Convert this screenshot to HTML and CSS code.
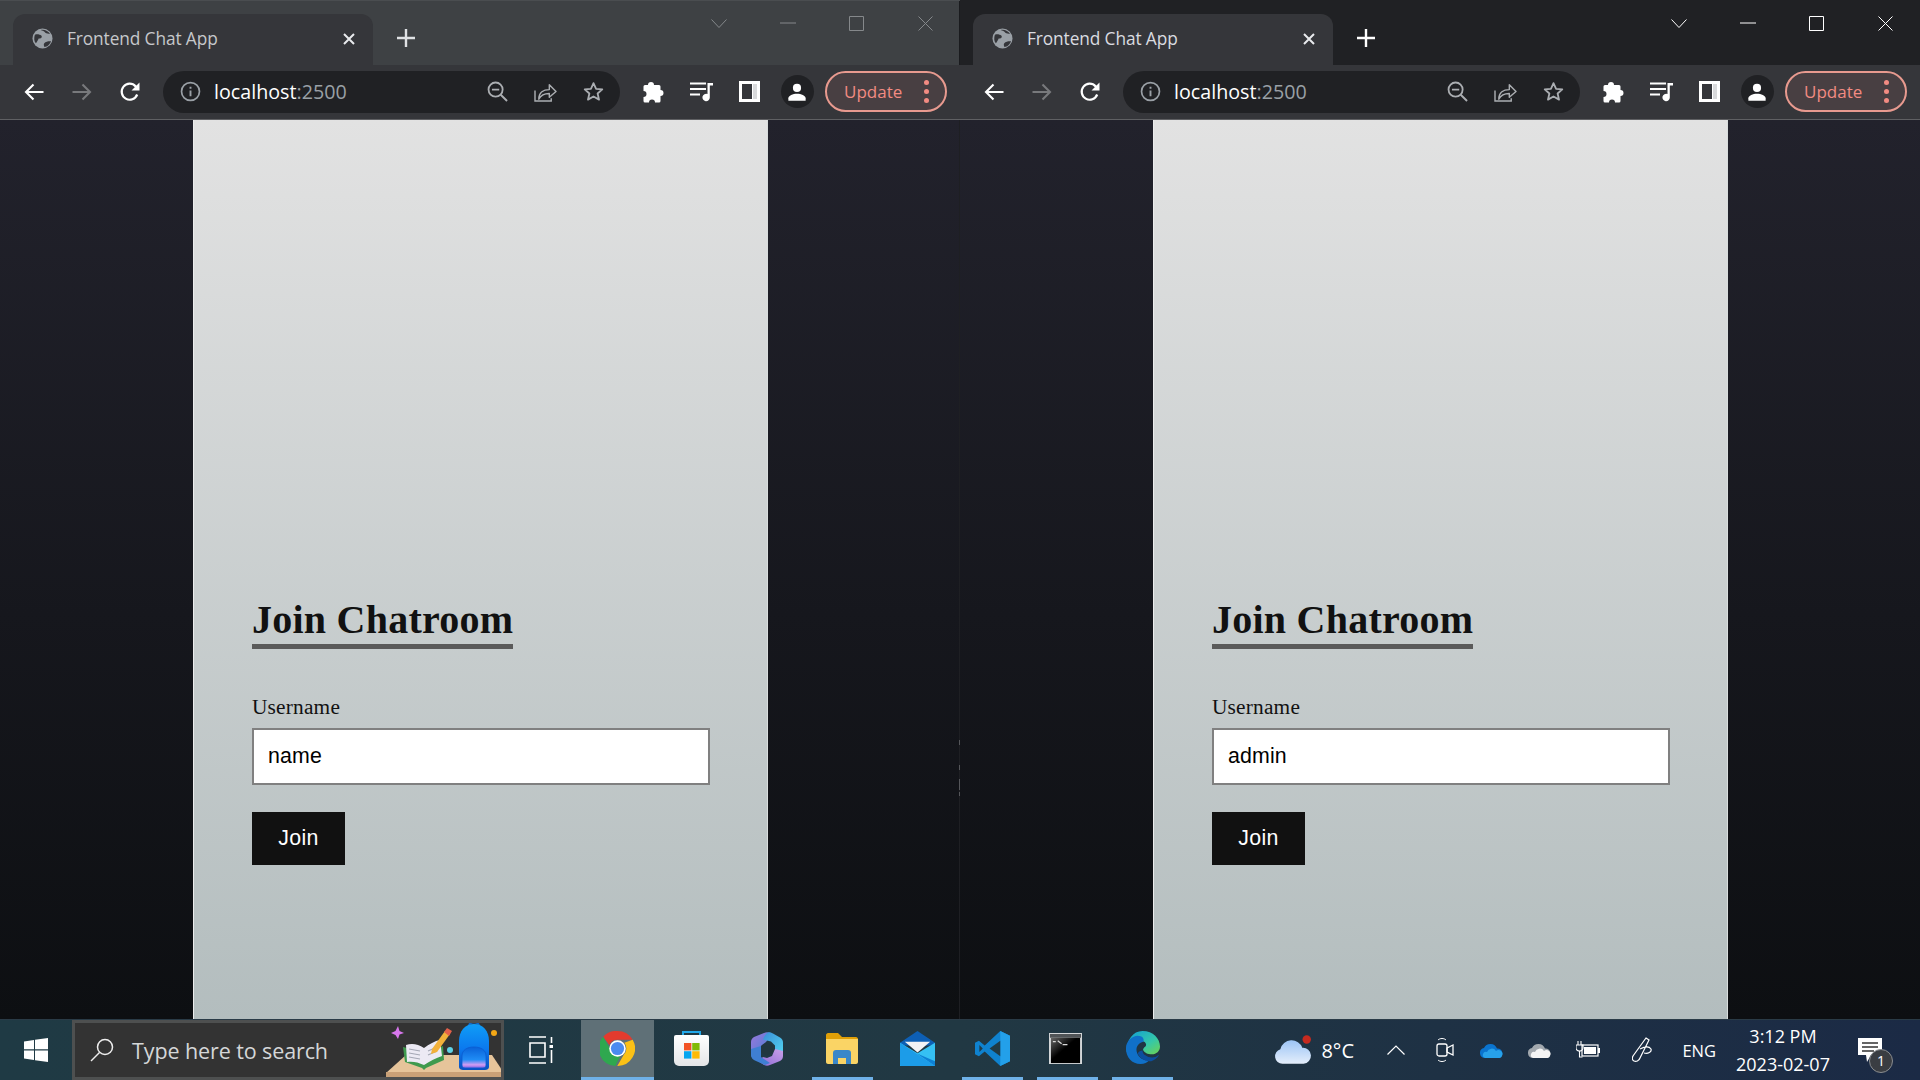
FILE: index.html
```html
<!DOCTYPE html>
<html lang="en">
<head>
<meta charset="utf-8">
<title>Frontend Chat App</title>
<link rel="stylesheet" href="styles.css">
</head>
<body>
<svg class="defs" aria-hidden="true">
  <defs>
    <linearGradient id="gBag" x1="0" y1="0" x2="0" y2="1"><stop offset="0" stop-color="#0f9df7"/><stop offset=".55" stop-color="#0b78ee"/><stop offset="1" stop-color="#0c50c0"/></linearGradient>
    <linearGradient id="gPocket" x1="0" y1="0" x2="0" y2="1"><stop offset="0" stop-color="#0a62d8"/><stop offset=".6" stop-color="#1f8cf5"/><stop offset=".85" stop-color="#d59cf2"/><stop offset="1" stop-color="#7a5fe0"/></linearGradient>
    <linearGradient id="gEdge" x1="0" y1="0" x2="1" y2="1"><stop offset="0" stop-color="#0f9bd7"/><stop offset=".6" stop-color="#35c8a8"/><stop offset="1" stop-color="#6fd24f"/></linearGradient>
    <linearGradient id="gCloud" x1="0" y1="0" x2="0" y2="1"><stop offset="0" stop-color="#9cc4f5"/><stop offset="1" stop-color="#e4eefb"/></linearGradient>
    <linearGradient id="gCmd" x1="0" y1="0" x2="1" y2="1"><stop offset="0" stop-color="#666"/><stop offset=".45" stop-color="#000"/></linearGradient>
    <linearGradient id="gStore" x1="0" y1="0" x2="0" y2="1"><stop offset="0" stop-color="#fff"/><stop offset="1" stop-color="#e4e6e8"/></linearGradient>
    <linearGradient id="gTL" x1="0" y1="0" x2="1" y2="1"><stop offset="0" stop-color="#9a78dc"/><stop offset="1" stop-color="#3f7fd2"/></linearGradient>
    <linearGradient id="gTR" x1="0" y1="0" x2="1" y2="1"><stop offset="0" stop-color="#3a8ed8"/><stop offset="1" stop-color="#53d6f2"/></linearGradient>
    <linearGradient id="gBR" x1="1" y1="0" x2="0" y2="1"><stop offset="0" stop-color="#c9a0ea"/><stop offset="1" stop-color="#8d6ad4"/></linearGradient>

    <symbol id="i-globe" viewBox="0 0 22 22"><circle cx="11" cy="11" r="10.500" fill="currentColor"/><path d="M3 7c3-1 5 0 7 1 1 2-1 3-3 3-1 2-2 4-3 5C2 14 2 10 3 7zM13 20c-1-2-1-4 1-5s4-1 6-1c-1 3-4 6-7 6zM9 2c2 1 4 1 5 3 1 1 3 1 5 1C17 3 13 1 9 2z" fill="#35363a"/></symbol>
    <symbol id="i-x" viewBox="0 0 14 14"><path d="M2 2l10 10M12 2L2 12" fill="none" stroke="currentColor" stroke-width="2"/></symbol>
    <symbol id="i-plus" viewBox="0 0 18 18"><path d="M9 0v18M0 9h18" fill="none" stroke="currentColor" stroke-width="2.400"/></symbol>
    <symbol id="i-back" viewBox="0 0 20 18"><path d="M19.500 9H2M9.500 1.500L2 9l7.500 7.500" fill="none" stroke="currentColor" stroke-width="2.100"/></symbol>
    <symbol id="i-fwd" viewBox="0 0 20 18"><path d="M.5 9H18M10.500 1.500L18 9l-7.500 7.500" fill="none" stroke="currentColor" stroke-width="2.100"/></symbol>
    <symbol id="i-reload" viewBox="0 0 22 22"><path d="M18.200 13.500A8 8 0 1 1 16.700 5.400L19 7.600" fill="none" stroke="currentColor" stroke-width="2.200"/><path d="M20.500 1.500v8h-8z" fill="currentColor"/></symbol>
    <symbol id="i-info" viewBox="0 0 22 22"><circle cx="11" cy="11" r="9.400" fill="none" stroke="currentColor" stroke-width="1.800"/><path d="M10 10h2v6h-2zM10 6h2v2h-2z" fill="currentColor"/></symbol>
    <symbol id="i-zoom" viewBox="0 0 22 22"><circle cx="9" cy="9" r="7.400" fill="none" stroke="currentColor" stroke-width="1.900"/><path d="M5.200 9h7.600M14.400 14.400l6.600 6.600" fill="none" stroke="currentColor" stroke-width="2"/></symbol>
    <symbol id="i-share" viewBox="0 0 24 22"><path d="M1 10v11h17v-3" fill="none" stroke="currentColor" stroke-width="1.500"/><path d="M5 19c0-7 5-10 11-10V4l7 7-7 6v-4c-5 0-9 2-11 6z" fill="none" stroke="currentColor" stroke-width="1.500" stroke-linejoin="round"/></symbol>
    <symbol id="i-star" viewBox="0 0 22 22"><path d="M11 2.200l2.700 6 6.500.6-4.900 4.300 1.500 6.400L11 16.200l-5.800 3.300 1.500-6.400L1.800 8.800l6.500-.6z" fill="none" stroke="currentColor" stroke-width="1.900" stroke-linejoin="round"/></symbol>
    <symbol id="i-puzzle" viewBox="0 0 22 22"><path d="M8 1a3 3 0 0 1 3 3h5a1.500 1.500 0 0 1 1.500 1.500V9a3 3 0 1 1 0 6v5a1.500 1.500 0 0 1-1.500 1.500h-4a3 3 0 1 0-6 0H2A1.500 1.500 0 0 1 .5 20v-4a3 3 0 1 0 0-6V5.500A1.500 1.500 0 0 1 2 4h3a3 3 0 0 1 3-3z" fill="currentColor"/></symbol>
    <symbol id="i-media" viewBox="0 0 24 20"><path d="M0 1.500h16M0 7h16M0 12.500h10" stroke="currentColor" stroke-width="2" fill="none"/><path d="M17.500 1h5.500v2.500h-3.200V15.500a3.700 3.700 0 1 1-2.300-3.400z" fill="currentColor"/></symbol>
    <symbol id="i-side" viewBox="0 0 21 21"><path d="M0 0h21v21H0z" fill="currentColor"/><path d="M3 3h10v15H3z" fill="#35363a"/><path d="M14 3h4v15h-4z" fill="#d9dadc"/></symbol>
    <symbol id="i-avatar" viewBox="0 0 22 22"><circle cx="11" cy="6.500" r="4.500" fill="currentColor"/><path d="M1.500 20.500v-2.500c0-3 5-5 9.500-5s9.500 2 9.500 5v2.500z" fill="currentColor"/></symbol>
    <symbol id="i-chev" viewBox="0 0 16 9"><path d="M.5.500L8 8.500 15.500.500" fill="none" stroke="currentColor"/></symbol>
    <symbol id="i-min" viewBox="0 0 16 2"><path d="M0 1h16" stroke="currentColor"/></symbol>
    <symbol id="i-max" viewBox="0 0 15 15"><path d="M.5.500h14v14H.5z" fill="none" stroke="currentColor"/></symbol>
    <symbol id="i-close" viewBox="0 0 15 15"><path d="M.5.500l14 14M14.500.500l-14 14" fill="none" stroke="currentColor"/></symbol>
  </defs>
</svg>

<main class="windows">
  <section class="win win--inactive">
    <header class="tabstrip">
      <div class="tab">
        <svg class="ic-globe"><use href="#i-globe"/></svg>
        <span class="tab-title">Frontend Chat App</span>
        <svg class="ic-x"><use href="#i-x"/></svg>
      </div>
      <svg class="ic-plus"><use href="#i-plus"/></svg>
      <div class="controls">
        <span class="ctl"><svg class="c-chev"><use href="#i-chev"/></svg></span>
        <span class="ctl"><svg class="c-min"><use href="#i-min"/></svg></span>
        <span class="ctl"><svg class="c-max"><use href="#i-max"/></svg></span>
        <span class="ctl"><svg class="c-close"><use href="#i-close"/></svg></span>
      </div>
    </header>
    <nav class="toolbar">
      <span class="tb"><svg class="ic-nav"><use href="#i-back"/></svg></span>
      <span class="tb tb--off"><svg class="ic-nav"><use href="#i-fwd"/></svg></span>
      <span class="tb"><svg class="ic-reload"><use href="#i-reload"/></svg></span>
      <div class="omni">
        <svg class="ic-info"><use href="#i-info"/></svg>
        <span class="url"><b>localhost</b>:2500</span>
        <span class="omni-actions">
          <svg class="ic-omni"><use href="#i-zoom"/></svg>
          <svg class="ic-omni ic-share"><use href="#i-share"/></svg>
          <svg class="ic-omni"><use href="#i-star"/></svg>
        </span>
      </div>
      <span class="tb tb--ext"><svg class="ic-puzzle"><use href="#i-puzzle"/></svg></span>
      <span class="tb"><svg class="ic-media"><use href="#i-media"/></svg></span>
      <span class="tb"><svg class="ic-side"><use href="#i-side"/></svg></span>
      <span class="tb"><span class="avatar"><svg class="ic-avatar"><use href="#i-avatar"/></svg></span></span>
      <div class="update"><span>Update</span><i class="dots"><em></em><em></em><em></em></i></div>
    </nav>
    <div class="viewport">
      <form class="card">
        <h1 class="title">Join Chatroom</h1>
        <label class="lbl" for="u1">Username</label>
        <input class="field" id="u1" type="text" value="name">
        <button class="join" type="button">Join</button>
      </form>
    </div>
  </section>

  <section class="win win--active">
    <header class="tabstrip">
      <div class="tab">
        <svg class="ic-globe"><use href="#i-globe"/></svg>
        <span class="tab-title">Frontend Chat App</span>
        <svg class="ic-x"><use href="#i-x"/></svg>
      </div>
      <svg class="ic-plus"><use href="#i-plus"/></svg>
      <div class="controls">
        <span class="ctl"><svg class="c-chev"><use href="#i-chev"/></svg></span>
        <span class="ctl"><svg class="c-min"><use href="#i-min"/></svg></span>
        <span class="ctl"><svg class="c-max"><use href="#i-max"/></svg></span>
        <span class="ctl"><svg class="c-close"><use href="#i-close"/></svg></span>
      </div>
    </header>
    <nav class="toolbar">
      <span class="tb"><svg class="ic-nav"><use href="#i-back"/></svg></span>
      <span class="tb tb--off"><svg class="ic-nav"><use href="#i-fwd"/></svg></span>
      <span class="tb"><svg class="ic-reload"><use href="#i-reload"/></svg></span>
      <div class="omni">
        <svg class="ic-info"><use href="#i-info"/></svg>
        <span class="url"><b>localhost</b>:2500</span>
        <span class="omni-actions">
          <svg class="ic-omni"><use href="#i-zoom"/></svg>
          <svg class="ic-omni ic-share"><use href="#i-share"/></svg>
          <svg class="ic-omni"><use href="#i-star"/></svg>
        </span>
      </div>
      <span class="tb tb--ext"><svg class="ic-puzzle"><use href="#i-puzzle"/></svg></span>
      <span class="tb"><svg class="ic-media"><use href="#i-media"/></svg></span>
      <span class="tb"><svg class="ic-side"><use href="#i-side"/></svg></span>
      <span class="tb"><span class="avatar"><svg class="ic-avatar"><use href="#i-avatar"/></svg></span></span>
      <div class="update"><span>Update</span><i class="dots"><em></em><em></em><em></em></i></div>
    </nav>
    <div class="viewport">
      <form class="card">
        <h1 class="title">Join Chatroom</h1>
        <label class="lbl" for="u2">Username</label>
        <input class="field" id="u2" type="text" value="admin">
        <button class="join" type="button">Join</button>
      </form>
    </div>
  </section>
</main>

<footer class="taskbar">
  <span class="start">
    <svg class="t-win" viewBox="0 0 24 24"><path d="M0 3.400l10-1.400v9.300H0zM11 1.800L24 0v11.300H11zM0 12.500h10v9.500L0 20.600zM11 12.500h13V24l-13-1.800z" fill="#fff"/></svg>
  </span>
  <div class="search">
    <svg class="t-lens" viewBox="0 0 24 24"><circle cx="15" cy="9" r="7.500" fill="none" stroke="#eee" stroke-width="1.500"/><path d="M9.500 14.500L1 23" stroke="#eee" stroke-width="1.500"/></svg>
    <span class="search-text">Type here to search</span>
    <svg class="t-art" viewBox="0 0 118 57">
      <path d="M0 53L20 35h86l12 18v4H0z" fill="#e6c49a"/><path d="M0 52h118v5H0z" fill="#c9a077"/>
      <path d="M12 6l1.500 5 4.500 2-4.500 1.500L12 19l-2.500-4L5 13l4.500-2z" fill="#d777ec"/>
      <path d="M17 27l23 6 17-7 1 14-18 8-2 2-2-2-17-6z" fill="#3f9a4e"/>
      <path d="M20 25c6-2 12-1 18 3l0 17c-6-3-12-4-17-3zM38 28c5-4 11-7 16-8l2 16c-6 2-12 5-18 9z" fill="#eceaf4"/>
      <path d="M23 29l11 2M23 33l11 2M23 37l11 2M42 31l9-4M42 35l9-4" stroke="#a5a8b5" stroke-width="1.200"/>
      <path d="M46 29l13-18 5 3-13 18-6 2z" fill="#f2b13a"/><path d="M58 12l3-4 5 3-3 5z" fill="#e3604a"/>
      <circle cx="64" cy="30" r="3" fill="#5fd2e5"/>
      <path d="M83 6c0-5 10-5 10 0" fill="none" stroke="#1268c8" stroke-width="2"/>
      <path d="M88 4c9 0 15 7 15 17v26c0 2-2 3-4 3H77c-2 0-4-1-4-3V21C73 11 79 4 88 4z" fill="url(#gBag)"/>
      <path d="M76 45V36c0-6 5-9 12-9s12 3 12 9v9c0 2-1 3-3 3H79c-2 0-3-1-3-3z" fill="url(#gPocket)" stroke="#0a5cd0" stroke-width=".8"/>
      <circle cx="108" cy="13" r="3" fill="#f3a716"/>
    </svg>
  </div>
  <span class="taskview">
    <svg class="t-view" viewBox="0 0 24 28"><path d="M0 1h17M0 27h17M1 7h15v14H1z" fill="none" stroke="#fff" stroke-width="1.600"/><path d="M22.500 1v6M22.500 14v13" stroke="#fff" stroke-width="1.600"/><rect x="20.500" y="9" width="4" height="3" fill="#fff"/></svg>
  </span>
  <span class="app app--chrome">
    <svg class="t-app" viewBox="0 0 36 36">
      <path d="M18 0a18 18 0 0 1 15.600 9H18a9 9 0 0 0-8.300 5.500L3.200 5.900A18 18 0 0 1 18 0z" fill="#e33b2e"/>
      <path d="M3.200 5.900l6.900 11.800a9 9 0 0 0 11 7.800L15.800 36A18 18 0 0 1 3.200 5.900z" fill="#2fa84f"/>
      <path d="M33.600 9a18 18 0 0 1-15.800 27l6.900-12A9 9 0 0 0 25 12z" fill="#fbc116"/>
      <circle cx="18" cy="18" r="8.500" fill="#fff"/><circle cx="18" cy="18" r="6.800" fill="#4a8bf0"/>
    </svg>
  </span>
  <span class="app app--store">
    <svg class="t-app" viewBox="0 0 35 35">
      <path d="M9 6V1h17v5" fill="none" stroke="#22a8ea" stroke-width="2"/>
      <path d="M2 4h31a2 2 0 0 1 2 2v24a5 5 0 0 1-5 5H5a5 5 0 0 1-5-5V6a2 2 0 0 1 2-2z" fill="url(#gStore)"/>
      <path d="M10 12h7.400v7.400H10z" fill="#f25325"/><path d="M18.200 12h7.400v7.400h-7.400z" fill="#80bb05"/><path d="M10 20.200h7.400v7.400H10z" fill="#05a6f0"/><path d="M18.200 20.200h7.400v7.400h-7.400z" fill="#ffba08"/>
    </svg>
  </span>
  <span class="app app--m365">
    <svg class="t-m365" viewBox="0 0 32 34">
      <path d="M13 1c2-1 4-1 6 0l2 1-6 8-4 3-1 6v7l-5 2c-3-1-5-3-5-7V10c0-2 1-4 3-5z" fill="url(#gTL)"/>
      <path d="M17 .5c1-.5 3 0 5 1l7 4c2 1 3 3 3 5v11l-3 2-5-3 0-7-4-4-8-2c1-3 3-6 5-7z" fill="url(#gTR)"/>
      <path d="M24 17l8 2v5c0 2-1 4-3 5l-10 4c-2 1-4 1-6 0l-6-4 5-4 4 1 5-2z" fill="url(#gBR)"/>
      <path d="M0 17l10-3v11l9 6-5 2-9-4c-3-1-5-3-5-6z" fill="#3f7fd2"/>
      <path d="M16 10.500l6 3.300v6.400l-6 3.300-6-3.300v-6.400z" fill="#21363f"/>
    </svg>
  </span>
  <span class="app app--files">
    <svg class="t-files" viewBox="0 0 32 32">
      <path d="M0 2c0-1 1-2 2-2h10l4 4h14c1 0 2 1 2 2v2H0z" fill="#e0a008"/>
      <path d="M0 6h32v23c0 1-1 2-2 2H2c-1 0-2-1-2-2z" fill="#fad465"/>
      <path d="M7 31V20c0-2 1-3 3-3h12c2 0 3 1 3 3v11h-5v-6h-8v6z" fill="#3a87c8"/>
    </svg>
  </span>
  <span class="app app--mail">
    <svg class="t-app" viewBox="0 0 36 36">
      <path d="M0 12L18 0l18 12v3H0z" fill="#0d5fb5"/>
      <path d="M5 11h26l-13 11z" fill="#f2f2f4"/>
      <path d="M0 12l18 11 18-11v24H0z" fill="#35c0f3"/>
      <path d="M0 12l36 24H1a1 1 0 0 1-1-1z" fill="#1c9ce8"/>
      <path d="M17 23l19 8v5z" fill="#0e80d4"/>
    </svg>
  </span>
  <span class="app app--code">
    <svg class="t-app" viewBox="0 0 36 36">
      <path d="M26 0l10 5v26l-10 5L10 21l-6 5-4-2V12l4-2 6 5z" fill="#0f82cf"/>
      <path d="M26 0l10 5v26l-10 5z" fill="#23a0ea"/>
      <path d="M26 10v16l-11-8z" fill="#213a45"/>
      <path d="M4.500 14.500L8 18l-3.500 3.500z" fill="#213a45"/>
    </svg>
  </span>
  <span class="app app--cmd">
    <svg class="t-cmd" viewBox="0 0 34 34">
      <path d="M0 1h34v32H0z" fill="#d3d6d8"/><path d="M1 2h32v4H1z" fill="#505457"/>
      <path d="M2 6h30v26H2z" fill="url(#gCmd)"/>
      <path d="M4 10h3M9 9l4 3M14 13h5" stroke="#d8d8d8" stroke-width="1.300"/>
    </svg>
  </span>
  <span class="app app--edge">
    <svg class="t-app" viewBox="0 0 36 36">
      <path d="M18 0c11 0 18 8 18 16 0 5-4 8-8 8-5 0-8-2-9-4-1 0 0-3 2-4 2-2 0-6-5-6-7 0-13 5-15 12C2 9 8 0 18 0z" fill="url(#gEdge)"/>
      <path d="M1 18c0-8 7-13 12-13 5 0 7 3 6 6-5 1-8 5-7 10s6 10 13 9c-2 2-5 4-9 4C7 34 1 27 1 18z" fill="#1070c8"/>
      <path d="M13 23c2 5 8 9 14 8 3-1 6-3 8-6l-1 0c-3 3-9 3-13 0-2-1-3-3-3-5-2 0-4 1-5 3z" fill="#0c4e9d"/>
    </svg>
  </span>
  <div class="tray">
    <svg class="s-cloud" viewBox="0 0 36 28"><path d="M8 27A7 7 0 0 1 6 13.300 11 11 0 0 1 27 12a7.500 7.500 0 0 1 1 15z" fill="url(#gCloud)"/><circle cx="31" cy="4" r="4" fill="#c62a1f"/></svg>
    <span class="temp">8°C</span>
    <svg class="s-caret" viewBox="0 0 18 10"><path d="M.5 9.500L9 1l8.500 8.500" fill="none" stroke="#fff" stroke-width="1.200"/></svg>
    <svg class="s-meet" viewBox="0 0 18 26"><rect x="1" y="7" width="10" height="12" rx="2" fill="none" stroke="#fff" stroke-width="1.300"/><path d="M11 11l6-3v10l-6-3z" fill="none" stroke="#fff" stroke-width="1.300"/><path d="M2 3c2-2 6-2 8 0M2 23c2 2 6 2 8 0" fill="none" stroke="#fff"/></svg>
    <svg class="s-drive" viewBox="0 0 24 16"><path d="M5 16a5 5 0 0 1-1-9.900A7 7 0 0 1 17 6.500 5 5 0 0 1 19.500 16z" fill="#0a74cf"/><path d="M5 16a3 3 0 0 1 2-6 5 5 0 0 1 9-1 4 4 0 0 1 6 5c-.5 1.200-1.500 2-2.500 2z" fill="#27a1ea"/></svg>
    <svg class="s-drive" viewBox="0 0 24 16"><path d="M5 16a5 5 0 0 1-1-9.900A7 7 0 0 1 17 6.500 5 5 0 0 1 19.500 16z" fill="#a2a8ae"/><path d="M5 16a3 3 0 0 1 2-6 5 5 0 0 1 9-1 4 4 0 0 1 6 5c-.5 1.200-1.500 2-2.500 2z" fill="#f4f4f4"/></svg>
    <svg class="s-batt" viewBox="0 0 24 18"><path d="M2 0v4M5 0v4M0 4h7v3c0 2-2 3-3.500 3S0 9 0 7zM3.500 10v6h3" fill="none" stroke="#fff" stroke-width="1.100"/><rect x="6" y="4" width="16" height="11" fill="none" stroke="#fff" stroke-width="1.200"/><rect x="8" y="6" width="12" height="7" fill="#fff"/><rect x="22" y="7" width="2" height="5" fill="#fff"/></svg>
    <svg class="s-pen" viewBox="0 0 20 26"><path d="M14 1l3 2-9 18c-1 3-4 4-6 3s-2-3-1-5zM8 12c4-2 9-3 11 0 1 3-3 5-7 4" fill="none" stroke="#fff" stroke-width="1.200"/></svg>
    <span class="lang">ENG</span>
    <div class="clock"><span>3:12 PM</span><span>2023-02-07</span></div>
    <div class="notif">
      <svg class="s-note" viewBox="0 0 24 24"><path d="M0 0h24v17H13l-4 7-1-7H0z" fill="#fff"/><path d="M4 5h16M4 9h16M4 13h12" stroke="#333" stroke-width="1.300"/></svg>
      <span class="badge">1</span>
    </div>
  </div>
</footer>
</body>
</html>
```

FILE: styles.css
```css
* { box-sizing: border-box; }
html, body { margin: 0; height: 100%; }
body { width: 1920px; height: 1080px; overflow: hidden; display: flex; flex-direction: column; background: #000; font-family: "Open Sans", "Noto Sans", sans-serif; }
.defs { display: block; width: 0; height: 0; flex: none; }
svg { display: block; flex: none; }

.windows { display: flex; height: 1019px; flex: none; }
.win { width: 960px; display: flex; flex-direction: column; }

.tabstrip { height: 65px; display: flex; align-items: flex-start; padding-left: 13px; flex: none; }
.win--inactive .tabstrip { background: #3e4144; border-top: 1px solid #4a4d50; box-shadow: inset -1px 0 #1a1b1e; }
.win--active .tabstrip { background: #202124; }

.tab { margin-top: 14px; width: 360px; height: 51px; background: #35363a; border-radius: 12px 12px 0 0; display: flex; align-items: center; padding: 0 0 2px 19px; color: #dadce0; flex: none; }
.win--inactive .tab { margin-top: 13px; color: #c6c8cb; }
.ic-globe { width: 21px; height: 21px; color: #9aa0a6; margin-right: 14px; }
.tab-title { font-size: 17.300px; flex: 1; white-space: nowrap; letter-spacing: -.1px; }
.ic-x { width: 14px; height: 14px; margin-right: 17px; color: #e8eaed; }
.ic-plus { width: 18px; height: 18px; margin: 29px 0 0 24px; color: #fff; }
.win--inactive .ic-plus { margin-top: 28px; color: #dfe1e4; }

.controls { margin-left: auto; display: flex; }
.ctl { width: 69px; height: 47px; display: flex; align-items: center; justify-content: center; color: #fff; }
.win--inactive .ctl { height: 45px; color: #85888b; }
.c-chev { width: 16px; height: 9px; }
.c-min { width: 16px; height: 2px; margin-bottom: 1px; }
.c-max { width: 15px; height: 15px; }
.c-close { width: 15px; height: 15px; }

.toolbar { height: 55px; flex: none; background: #35363a; border-bottom: 1px solid #5f6063; display: flex; align-items: center; padding: 0 0 1px 10px; }
.tb { width: 48px; height: 42px; display: flex; align-items: center; justify-content: center; color: #fff; flex: none; }
.tb--off { color: #78797c; }
.ic-nav { width: 20px; height: 18px; }
.ic-reload { width: 22px; height: 22px; }

.omni { width: 457px; height: 42px; border-radius: 21px; background: #202124; margin: 0 9px; display: flex; align-items: center; padding: 0 0 0 17px; color: #9aa0a6; flex: none; }
.ic-info { width: 21px; height: 21px; margin-right: 13px; }
.url { font-size: 19.700px; color: #9aa0a6; flex: 1; }
.url b { font-weight: 400; color: #fff; }
.omni-actions { display: flex; gap: 26px; padding-right: 16px; align-items: center; }
.ic-omni { width: 21px; height: 21px; color: #abaeb2; }
.ic-share { width: 23px; }

.tb--ext { padding-left: 2px; }
.ic-puzzle { width: 22px; height: 22px; }
.ic-media { width: 24px; height: 20px; margin-left: 1px; }
.ic-side { width: 21px; height: 21px; }
.avatar { width: 33px; height: 33px; border-radius: 50%; background: #202124; display: flex; align-items: center; justify-content: center; }
.ic-avatar { width: 20px; height: 20px; color: #fff; }

.update { width: 122px; height: 41px; margin-left: 4px; border: 2px solid #e89a8f; border-radius: 21px; background: #483f42; color: #f28b82; display: flex; align-items: center; padding-left: 17px; font-size: 17px; flex: none; }
.update span { flex: 1; }
.dots { display: flex; flex-direction: column; gap: 4px; margin-right: 16px; }
.dots em { display: block; width: 5px; height: 5px; border-radius: 50%; background: #f28b82; }

.viewport { flex: 1; display: flex; justify-content: center; padding-left: 1px; background: linear-gradient(180deg, #22222c 0%, #16171d 55%, #0d0f12 100%); position: relative; }
.win--inactive .viewport { box-shadow: inset -1px 0 #1e1f23; }
.win--inactive .viewport::after { content: ""; position: absolute; right: -1px; top: 620px; width: 2px; height: 56px; background: linear-gradient(180deg, #55565a 0 5px, transparent 5px 25px, #55565a 25px 30px, transparent 30px 39px, #55565a 39px 50px, transparent 50px 52px, #55565a 52px 56px); }
.card { width: 575px; border-left: 1px solid #eceded; border-right: 1px solid #d8dcdc; background: linear-gradient(180deg, #e2e2e2 0%, #b3bdbe 100%); display: flex; flex-direction: column; align-items: flex-start; justify-content: flex-end; padding: 0 57px 154px 58px; }

.title { margin: 0 0 46px; font-family: "Liberation Serif", serif; font-size: 40px; letter-spacing: .25px; font-weight: 700; line-height: 48px; color: #111; border-bottom: 5px solid #5a5a5a; padding-bottom: 0; }
.lbl { font-family: "Liberation Serif", serif; font-size: 21.330px; letter-spacing: .2px; line-height: 24px; color: #111; margin-bottom: 9px; }
.field { width: 458px; height: 57px; border: 2px solid #808080; background: #fff; padding: 0 14px; font-family: "Liberation Sans", sans-serif; font-size: 21.330px; letter-spacing: .15px; color: #000; border-radius: 0; outline: none; margin-bottom: 27px; }
.join { width: 93px; height: 53px; background: #111; color: #fff; border: 0; border-radius: 0; padding: 0; font-family: "Liberation Sans", sans-serif; font-size: 21.330px; letter-spacing: .3px; }

.taskbar { height: 61px; flex: none; display: flex; align-items: center; background: linear-gradient(90deg, #1f3a44 0%, #213843 50%, #1b2a45 100%); border-top: 1px solid #2a3b47; }
.start { width: 72px; display: flex; justify-content: center; flex: none; }
.t-win { width: 24px; height: 24px; }
.search { width: 432px; height: 60px; background: #333; border: 3px solid #4e5050; display: flex; align-items: center; flex: none; color: #d5d7d8; overflow: hidden; }
.t-lens { width: 24px; height: 24px; margin: 0 18px 0 15px; }
.search-text { font-size: 21.500px; letter-spacing: -.1px; flex: 1; white-space: nowrap; }
.t-art { width: 118px; height: 57px; align-self: flex-end; margin-right: -3px; }
.taskview { width: 73px; margin-right: 4px; display: flex; justify-content: center; flex: none; }
.t-view { width: 24px; height: 28px; }
.app { height: 60px; display: flex; align-items: center; justify-content: center; flex: none; border-bottom: 3px solid transparent; }
.t-app { width: 35px; height: 35px; }
.t-m365 { width: 32px; height: 34px; }
.t-files { width: 32px; height: 32px; margin-right: 1px; }
.t-cmd { width: 33px; height: 33px; margin-right: 4px; }
.app--chrome { width: 73px; background: #5f7077; border-bottom-color: #6fb1e8; }
.app--store { width: 74px; }
.app--m365 { width: 62px; margin-left: 8px; }
.app--files { width: 61px; margin-left: 14px; border-bottom-color: #6fb1e8; }
.app--mail { width: 74px; margin-left: 7px; }
.app--code { width: 61px; margin-left: 8px; border-bottom-color: #6fb1e8; }
.app--cmd { width: 61px; margin-left: 14px; border-bottom-color: #6fb1e8; }
.app--edge { width: 61px; margin-left: 14px; border-bottom-color: #6fb1e8; }
.tray { margin-left: auto; display: flex; align-items: center; color: #fff; flex: none; }
.s-cloud { width: 38px; height: 30px; margin-right: 9px; }
.temp { font-size: 20px; width: 33px; margin-right: 33px; white-space: nowrap; }
.s-caret { width: 18px; height: 10px; margin-right: 31px; }
.s-meet { width: 18px; height: 26px; margin-right: 26px; }
.s-drive { width: 24px; height: 16px; margin-right: 24px; }
.s-batt { width: 24px; height: 18px; margin-right: 32px; }
.s-pen { width: 20px; height: 26px; margin-right: 30px; }
.lang { font-size: 16.500px; margin-right: 16px; }
.clock { display: flex; flex-direction: column; align-items: center; width: 102px; font-size: 18px; line-height: 28px; white-space: nowrap; }
.notif { width: 86px; padding-left: 24px; position: relative; }
.s-note { width: 24px; height: 24px; }
.badge { position: absolute; left: 35px; top: 11px; width: 24px; height: 24px; border-radius: 50%; background: #3a3d42; border: 1px solid #8a8d90; font-size: 14px; line-height: 22px; text-align: center; color: #fff; }
```
